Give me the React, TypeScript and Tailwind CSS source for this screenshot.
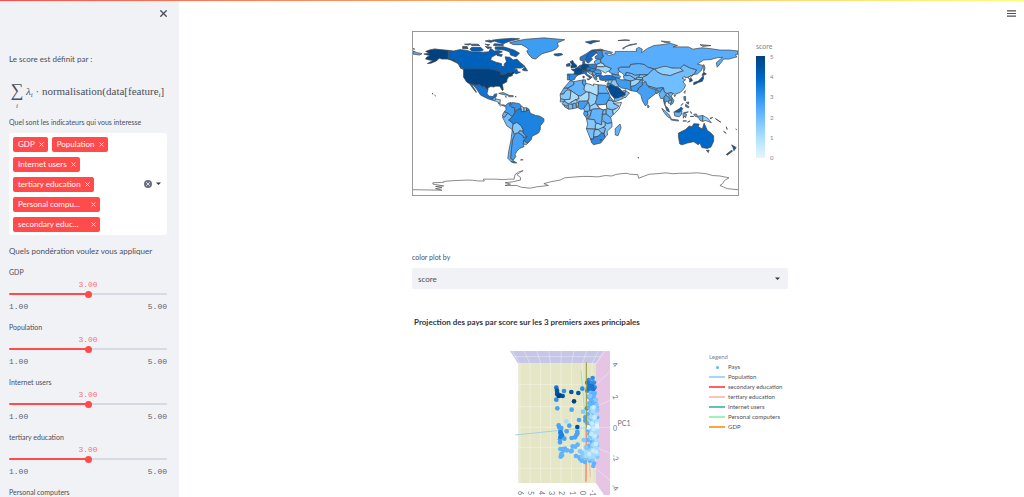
import { useState } from 'react';
import clsx from 'clsx';
import { X } from 'lucide-react';

interface Region {
  fill: string;
  // one entry per polygon, "lon,lat" pairs
  shapes: string[];
}

const REGIONS: Region[] = [
  { fill: '#004280', shapes: [
    '-124,48.5 -123,49 -95,49 -89,48 -83,46 -82.5,42.5 -79,43 -75,45 -71,45 -69,47 -67,45 -70,43 -70,41.5 -74,40.5 -76,37 -76,35 -81,32 -80,26 -81,25 -82.7,28 -84,30 -89,30 -90,29 -94,29.5 -97,28 -97,26 -99,27 -101,30 -103,29 -106,31.5 -111,31.3 -114.7,32.5 -117,32.5 -120.5,34.5 -124,40',
    '-141,60 -141,69.7 -150,70.5 -156,71.3 -162,70 -166,68.5 -162,66.5 -168,65.6 -164,64.5 -161,64 -165,62 -166,60 -162,59 -158,58.5 -164,55 -160,55.5 -154,58 -151,61 -148,60 -141,60 -137,58.5 -130,55 -132,57 -135,59.5',
    '-156,20 -155,19.2',
    '-159,22 -157.7,21.3',
  ] },
  { fill: '#0061bd', shapes: [
    '-141,60 -141,69.7 -135,69 -128,70.5 -120,69.5 -115,68 -108,68 -102,67.7 -96,68 -94,72 -90,69 -85,69.5 -81,68 -86,66 -93,62 -94,59 -88,56.5 -82,55 -82,52.5 -79,51.5 -79,54.5 -76.5,57 -78,62.5 -73,62 -69,59 -65,60 -61,56 -56,52 -60,50 -66,50 -69,48 -65,49 -64,46 -61,45.5 -66,43.5 -67,45 -69,47 -71,45 -75,45 -79,43 -82.5,42.5 -83,46 -89,48 -95,49 -123,49 -128,51 -130,55 -132,57 -135,59.5',
    '-80,73.7 -76,72.5 -68,70 -62,66.5 -66,62.5 -72,64.5 -73,68 -79,70 -89,71 -89,73.5',
    '-115,73 -105,73 -102,70 -105,69 -115,69 -117,71',
    '-125,74 -120,74 -119,71.5 -125,71.5',
    '-90,77 -80,76.5 -80,75 -91,75',
    '-92,81 -85,82 -70,83 -62,82.5 -75,79 -80,77 -87,79',
    '-116,76.5 -108,76.5 -106,75 -115,75',
    '-123,76.5 -116,77 -118,75.5',
    '-100,76.5 -95,76 -97,75',
    '-96,81 -90,80 -94,78.5 -100,80',
    '-87,66 -81,65 -82,63 -87,64',
    '-59,48 -56,51.5 -53,47 -56,47',
    '-128,50.5 -123.5,48.5 -125,49',
    '-100,74 -93,73 -97,71.5',
  ] },
  { fill: '#3d9df3', shapes: [
    '-73,78 -66,80 -55,82 -35,83.5 -12,81.5 -20,78 -19,74 -22,71 -26,69 -37,66 -42,62 -44,60 -48,61 -52,65 -54,69 -52,71 -56,74 -60,76 -69,76',
  ] },
  { fill: '#1272d3', shapes: [
    '-117,32.5 -114.7,32.5 -111,31.3 -106,31.5 -103,29 -101,30 -99,27 -97,26 -98,22 -96,19 -91,18.5 -90,21 -87,21.5 -88,18 -91,17 -92,14.5 -97,16 -105,20 -109,26 -113,31 -114.5,31 -110,24 -110,23 -114,28',
  ] },
  { fill: '#6ab9ff', shapes: ['-92,14.5 -91,17 -89,17.5 -88,15.7 -90,13.8', '-78,7.5 -82,9 -80,9.5 -77.4,8.5'] },
  { fill: '#97d3ff', shapes: ['-88,15.7 -83.2,15 -83.7,11 -87.5,13 -90,13.8', '-85.5,11 -83.7,11 -82,9 -83,8 -85,10'] },
  { fill: '#60b4ff', shapes: ['-85,22 -80,23 -74,20 -77,20', '-74,19.8 -69,19.5 -69,18.3 -74,18.3', '-78,18.4 -76.3,18', '-67,18.4 -65.6,18.2'] },
  { fill: '#3d9df3', shapes: ['-77.4,8.5 -75,11 -71.5,12 -73,9 -71,7 -67.5,6 -67,1 -70,-4 -75,0 -79,1.5 -77,4'] },
  { fill: '#3492eb', shapes: ['-71.5,12 -71,9.5 -70,12 -62,10.5 -60,8 -61,5 -64,4 -67,1 -67.5,6 -71,7 -73,9'] },
  { fill: '#97d3ff', shapes: ['-60,8 -57,6 -57,2 -60,1.5 -61,5', '-57,6 -54,6 -54.5,2.3 -57,2'] },
  { fill: '#3d9df3', shapes: ['-54,6 -51.5,4.3 -54.5,2.3'] },
  { fill: '#60b4ff', shapes: ['-79,1.5 -75,0 -78.5,-4.5 -81,-3 -80,0'] },
  { fill: '#70bdff', shapes: ['-81,-4 -78.5,-4.5 -75,0 -70,-4 -74,-7.5 -70.5,-10 -69,-12 -70,-18 -76,-14 -79,-8'] },
  { fill: '#83c9ff', shapes: ['-69,-12 -65,-10 -60,-14 -58,-18 -58,-20 -62,-19.5 -63,-22 -68,-23 -70,-18'] },
  { fill: '#1c83e1', shapes: [
    '-70,-4 -67,1 -64,4 -60,5 -60,1.5 -57,2 -54.5,2.3 -51.5,4.3 -50,0 -44,-2.5 -40,-3 -35,-6 -35,-9 -39,-14 -39,-18 -41,-22 -48,-25.5 -49,-29 -53,-33.5 -57.5,-30 -54,-26 -58,-22 -58,-18 -60,-14 -65,-10 -69,-12 -70.5,-10 -74,-7.5',
  ] },
  { fill: '#60b4ff', shapes: ['-62,-19.5 -58,-20 -58,-22 -54,-26 -58,-27 -58,-25 -63,-22', '-57.5,-30 -53,-33.5 -55,-35 -58,-34'] },
  { fill: '#459ff5', shapes: ['-66,-22 -63,-22 -58,-25 -58,-27 -54,-26 -57.5,-30 -58,-34 -57,-37 -62,-39 -65,-42 -67,-46 -66,-48 -69,-52 -72,-50 -71,-40 -70,-30 -68,-25', '-68.5,-53 -65,-55 -68.5,-55'] },
  { fill: '#60b4ff', shapes: ['-70,-18 -68,-23 -68,-25 -70,-30 -71,-40 -72,-50 -69,-52 -71,-54 -75,-50 -74,-42 -71.5,-30', '-71,-54 -68.5,-53 -68.5,-55'] },
  { fill: '#83c9ff', shapes: ['-61,-51.7 -58,-51.5'] },
  { fill: '#0e5fb5', shapes: ['-24,65.5 -16,66.3 -14,65 -19,63.4 -23,64'] },
  { fill: '#004c92', shapes: ['-5,50 1,51 1.5,53 -2,56 -3,58.5 -6,57 -4,54 -5,52'] },
  { fill: '#0e5fb5', shapes: ['-10,52 -6,52.3 -6,55 -8,55 -10,54'] },
  { fill: '#004c92', shapes: ['-4.5,48.5 -1,49 2.5,51 6,49.5 8,48.7 7,46 7.5,43.8 3,42.5 -1.7,43.4 -1,46', '6,49.5 6,51 7,53.5 9,55 14,54 15,51 12,50 13,48 8,47.7 8,48.7'] },
  { fill: '#1468c0', shapes: ['2.5,51 4.5,53 7,53.5 6,51 6,49.5', '8,55 8,57 10.5,57.5 10,55', '7,46 8,47.7 13,47.7 16.5,48.7 16,46.7 12,46.8 10,46.5'] },
  { fill: '#2b8ce8', shapes: ['-9,43.5 -1.7,43.4 3,42.5 0,40 -1,37.5 -5,36 -7,37 -7,42 -9,42'] },
  { fill: '#4aa4f6', shapes: ['-9,42 -7,42 -7,37 -9,37'] },
  { fill: '#1a70c9', shapes: ['7,46 10,46.5 12,46.8 13.5,46 12,44.5 14,42.5 18.5,40 16,38 15,40 12,42 10,44 7.5,43.8', '12.5,38 15.5,38 15,36.8', '8,41 9.7,41 9.5,39 8.5,39'] },
  { fill: '#2278d3', shapes: ['5,59 5,62 12,66 18,70 28,71 31,70 26,69.5 20,69 16,68 13,64.5 12,61 11,59 8,58'] },
  { fill: '#1469c6', shapes: ['11,59 12,61 13,64.5 16,68 20,69 24,67 22,65.5 17,61.5 19,60 16,57 14,55.5 12.5,56.5'] },
  { fill: '#2f88dd', shapes: ['20,69 26,69.5 29,69.5 30,66 31,62.5 28,60.5 22.5,60 21.5,62.5 25,65 24,67'] },
  { fill: '#1c83e1', shapes: ['14,54 19,54.5 23.5,54 23.5,51 22.5,49 18,49.5 15,51'] },
  { fill: '#2f8fe6', shapes: ['12,50 15,51 18,49.5 22.5,49 21,46 16,46.7 16.5,48.7 13,48.7'] },
  { fill: '#60b4ff', shapes: ['21,57.5 24,59.5 28,59.5 28,56 23.5,54 21,55.5', '13.5,46 16,46.7 19,46 19,42 15,44.5', '19,42 19,46 21,46 22.5,44 22,42', '19.5,40 19.5,42.5 21,41.5'] },
  { fill: '#4aa4f6', shapes: ['20.5,46 22.5,48 26.5,48 28.5,45.3 28.5,43.7 23,44', '22.5,44 28.5,43.7 28,42 23,41.5'] },
  { fill: '#2f8fe6', shapes: ['20,39.5 23,41.3 26,41.5 23,40 24,38 22.5,36.5 21,38', '23.5,35.5 26,35.2'] },
  { fill: '#b4e2ff', shapes: ['23.5,54 28,56 31,55 32,53 30.5,51.5 23.5,51.5'] },
  { fill: '#9bd6ff', shapes: ['22.5,49 23.5,51.5 30.5,51.5 34,52 40,49.5 38,47 35,46 33,44.5 30,46.3 26.5,48'] },
  { fill: '#1c75d2', shapes: ['26,41.5 28,41.8 31,41.2 35,42 41,41.5 44.5,39.5 44.5,37 36,36.5 30,36.3 27,37'] },
  { fill: '#0e5fb5', shapes: ['11,79 20,80.5 27,80 20,78.5 17,76.7'] },
  { fill: '#58aefc', shapes: [
    '28,60 31,62.5 30,66 29,69.5 33,69.5 41,67.5 40,66.3 33,66.6 37,64 44,66 44,68.5 54,68.5 60,68.5 68,68.5 67,71 70,73 74,71 73,67 80,72 87,75 100,76.5 105,77.5 113,75 108,73.5 125,73.5 130,71 140,72.5 150,71.5 160,70 170,70 180,69 180,65.5 177,64.5 179,62.5 170,60 164,60 162,57 157,51 156,56 163,62 157,61.5 150,59.5 142,59 135,54.5 141,53 140,48 135,43.5 131,43 134,48 127,50 120,53.5 117,49.5 107,50 98,50.5 88,49 80,51 76,54 70,55 61,54 60,51 50,51 47,49.5 49,46 47,45 48,42 42,43.5 38,45 37,47 40,49.5 34,52 32,53 31,55 28,56',
    '-180,69 -175,67 -170,66 -173,64.5 -180,65.5',
    '53,71 56,74 68,77 60,76 52,72',
    '142,54 143.5,50 142,46',
    '138,76 150,75 141,74',
    '95,80 105,79 100,78',
    '-180,71.5 -178,71',
    '47,80.5 60,80.8 55,81.5',
  ] },
  { fill: '#60b4ff', shapes: ['47,49.5 50,51 60,51 61,54 70,55 76,54 80,51 87,49 83,46 80,42.5 71,42.5 66,42 62,44 56,45 55,41.5 51,45 49,46'] },
  { fill: '#70bdff', shapes: ['56,45 62,44 66,42 71,42.5 71,40.5 67.5,39.5 67,37.5 60,42 56,41.5', '53,41.5 60,42 67,37.5 62,35.5 54,37.3'] },
  { fill: '#83c9ff', shapes: ['71,42.5 80,42.5 74,39.5 70,39.7', '67.5,39.5 74,39.5 74.5,37.5 68,37'] },
  { fill: '#4aa4f6', shapes: ['41,41.5 40,43.5 48,42 50,40.5 48.5,38.5 44.5,39.5'] },
  { fill: '#8fd0ff', shapes: ['88,49 98,52 102,51.5 107,50 116,50 119.5,47 112,44.5 105,41.7 96,43 91,45.5'] },
  { fill: '#70bdff', shapes: [
    '74,39.5 80,42.5 83,46 87,49 91,45.5 96,43 105,41.7 112,44.5 119.5,47 116,50 120,53.5 127,50 134,48 131,43 125,40 121.5,39 121,41 118,39 122,37 119,35 122,31 120,27 116,23 110,21 106,22.8 102,21.5 98,24 97.5,28 92,27.5 88,28 81,30 78,33 74.5,37.5',
    '109,20 111,20 110,18.3',
  ] },
  { fill: '#ffffff', shapes: ['125,40 131,43 127.5,39.5 126.5,38 125,38.5', '120,23.5 121.8,25 121,22'] },
  { fill: '#0054a3', shapes: ['126.5,38 128.5,38.5 129.5,36 126.5,34.5'] },
  { fill: '#0054a3', shapes: ['131,34 136,35.7 140,39.5 141.5,41.5 142,39 140.5,35.5 136,34 131,31.5', '140,42 142,45.5 145,43.5 142,42'] },
  { fill: '#459ff5', shapes: ['68,24 70,28 74,31 74,34 78,35 79,31 81,30 88,26.5 92,28 97,28.5 94,24 91.5,23 89,22 86.5,20 80,15 80,11 77.5,8 74,14 72.5,20'] },
  { fill: '#3d9df3', shapes: ['61.5,25 61,29.5 66,31 70,34 72,37 74.5,37 74,34 74,31 70,28 68,24', '80,9.5 81.7,7 80,6'] },
  { fill: '#9bd6ff', shapes: ['61,29.5 61,35.5 67,37.5 72,37 70,34 66,31', '81,30 88,28 88,26.5 81,28.8'] },
  { fill: '#58aefc', shapes: ['89,26 91.5,25 91.5,22.5 89,22'] },
  { fill: '#60b4ff', shapes: ['92.5,21 94,24 97.5,28 98,24 101,21.5 98,18 99,14 98.5,10.5 97,16.5 94.5,16'] },
  { fill: '#4aa4f6', shapes: ['98,18 100,20 104,17.5 105,14.5 102.5,12.5 100,13.5 99,9 102,6 100,6.5 98.5,10.5'] },
  { fill: '#83c9ff', shapes: ['101,21.5 102,22 107,16 106,14.5 104,17.5 100,20', '103,14 107,14 106,11 103,11'] },
  { fill: '#60b4ff', shapes: ['102,22 106,22.8 108,21.5 106,19 109,14 108,11 105,9 107,14 107,16'] },
  { fill: '#0e5fb5', shapes: ['100,6.5 103,5 104,1.5 101,3', '110,2 115,5 117,7 119,5 115,1 111,1'] },
  { fill: '#60b4ff', shapes: [
    '95.5,5.5 100,2 104,-2 106,-6 102,-4 98,1',
    '105.5,-6.5 114,-7.5 114,-8.7 106,-7.5',
    '109,1.5 115,1 118,3 117.5,-1 115,-4 110,-3',
    '119,0 121,1 125,1.5 120.5,0 123,-1 122,-5 120.5,-3 119.5,-5.5',
    '131,-1 134,-0.8 135,-3.3 141,-2.5 141,-9 138,-8 136,-4.5 132,-3',
    '119,-8.5 123,-8.5', '124,-10 127,-8.5', '127.5,2 128.5,-0.5', '127,-3.5 131,-3.5',
  ] },
  { fill: '#97d3ff', shapes: ['141,-2.5 147,-6 150.5,-10.5 144,-8 141,-9', '149,-5.5 152,-4.5 150,-6.2'] },
  { fill: '#3d8fe0', shapes: ['120,18.5 122,18.5 122,14 120.3,14.5', '122,10 126,7 125,6 122,7.5', '122.5,12 125.5,12.5 125,10', '117,8.5 119,11'] },
  { fill: '#0068c9', shapes: [
    '114,-22 114,-26 115.5,-34 118,-35 124,-33 131,-31.5 136,-35 138,-33 140,-38 146,-39 150,-37.5 153,-31 153,-25 149,-21 146,-19 142.5,-11 140.5,-17.5 136,-15 137,-12 131,-11.5 129,-15 126,-14 122,-18',
    '145,-41 148,-41 147,-43.5',
  ] },
  { fill: '#0e5fb5', shapes: ['173,-35 178,-38 175.5,-41.5 174.5,-38', '173,-41 174,-42 168,-46.5 167,-45.5'] },
  { fill: '#83c9ff', shapes: ['155,-6 161,-10', '164,-20 167,-22.3', '167,-15 168,-18', '177.5,-17.5 178.5,-18.2', '69,-49 70.3,-49.5'] },
  { fill: '#3d9df3', shapes: ['44.5,39.5 48.5,38.5 50,37 54,37 61,36 61,29.5 61.5,25 57,27 51,28 48,30 45.5,34 44.5,37'] },
  { fill: '#83c9ff', shapes: ['39,33 41,37 44.5,37 45.5,34 48,30 44.5,29.3', '36,36.5 41,37 39,33 36,33'] },
  { fill: '#2f8fe6', shapes: ['35,33 36,33 39,32 37,29.5 35,29.5', '32.5,35 34.5,35.5'] },
  { fill: '#004c92', shapes: ['35,29.5 37,29.5 39,32 44.5,29.3 48,28.5 50,26.5 51.5,24.3 55,22.5 55,20 52,19 47,17 43,16.5 39,21'] },
  { fill: '#60b4ff', shapes: ['51.5,24.3 56,26 55,22.5', '43,16.5 47,17 52,19 53,16.5 45,13 43,13'] },
  { fill: '#83c9ff', shapes: ['56,24.5 59.8,22.5 55,17 52,19 55,20 55,22.5'] },
  { fill: '#60b4ff', shapes: ['-6,36 -2,35 -1.5,32 -8.5,28 -13,27.7 -9.8,31.5', '25,31.5 32,31 34.5,30 34,27.5 37,22 25,22'] },
  { fill: '#60b4ff', shapes: ['-17,21 -13,27.7 -8.7,27.7 -8.7,26 -12,23.5 -13,21.3'] },
  { fill: '#60b4ff', shapes: ['-2,35 8.5,37 7.5,33.5 10,30 9.5,26.5 12,23.5 5.5,19 3,19.5 -5,25 -8.7,27.5 -1.5,32'] },
  { fill: '#4aa4f6', shapes: ['8.5,37 11,37 11.5,33 10,30 7.5,33.5'] },
  { fill: '#b0e0ff', shapes: ['11.5,33 15.5,32.3 20,30.5 20,32.5 25,31.5 25,20 24,19.5 15,23.5 12,23.5 9.5,26.5 10,30'] },
  { fill: '#83c9ff', shapes: ['-17,21 -13,21.3 -12,23.5 -8.7,26 -5,25 -6,15.5 -12,15 -16.5,16'] },
  { fill: '#a6dcff', shapes: ['-5,25 3,19.5 4,16 0,15 -5,12 -8,10.5 -12,13 -12,15 -6,15.5'] },
  { fill: '#a6dcff', shapes: ['3,19.5 5.5,19 12,23.5 15,23 15,17 13,13.5 4,13 0,15 4,16'] },
  { fill: '#8fd0ff', shapes: ['15,23.5 24,19.5 23.5,15.5 22,11 16,7.5 14,13 15,17'] },
  { fill: '#4aa4f6', shapes: ['25,22 37,22 38.5,18 36,14 34,10 24,9 22,12.5 23.5,15.5 24,20 25,20'] },
  { fill: '#ffffff', shapes: ['24,9 34,10 35,5 31,3.7 27,5'] },
  { fill: '#70bdff', shapes: ['36,14 38.5,18 43,12.5 39.5,14.5', '-16.5,16 -12,15 -12,13 -17,12.5'] },
  { fill: '#83c9ff', shapes: ['34,10 36,14 39.5,14.5 42,12 42,11 48,8 45,5 40,4 35,5'] },
  { fill: '#b0e0ff', shapes: ['42,11 51,12 48,4.5 42,-1.7 41,3.5 45,5 48,8'] },
  { fill: '#70bdff', shapes: ['-15,11 -12,13 -8,10.5 -8,7.7 -11,8.5 -13.5,9', '-13,9.5 -11,8.5 -7.5,4.5 -12,7', '-8,10.5 -5,10 -3,9.5 -3,5 -7.5,4.5 -8,8'] },
  { fill: '#97d3ff', shapes: ['-5,12 0,15 2.5,12 0,11 -3,9.5 -5,10', '1,11 3.5,12 2.7,6.3 1.2,6'] },
  { fill: '#60b4ff', shapes: ['-3,11 0,11 1.2,6 -3,5'] },
  { fill: '#3d9df3', shapes: ['2.7,6.3 3.5,12 4,13.5 13,13.5 14,12 9,5 6,4.3'] },
  { fill: '#70bdff', shapes: ['9,5 14,12 15,10 16,2 10,2.2'] },
  { fill: '#97d3ff', shapes: ['16,7.5 22,11 27,5 19,4.5 16,3'] },
  { fill: '#4aa4f6', shapes: ['9.5,2 13,2 14,-2 11,-4 9,-1'] },
  { fill: '#70bdff', shapes: ['13,2 18,3.5 16,-3 12,-5 11,-4 14,-2'] },
  { fill: '#60b4ff', shapes: ['12,-6 16,-4 18,3.5 19,4.5 27,5 31,3.7 29.5,-1 29.5,-6 28.5,-9 29,-13 25,-11.5 22,-11 21,-7'] },
  { fill: '#70bdff', shapes: ['31,3.7 34,4 34,-1 29.7,-1.3', '34,4 35,5 40,4 41,3.5 41.5,-1.7 39,-4.7 34,-1'] },
  { fill: '#60b4ff', shapes: ['30.5,-1 34,-1 39,-4.7 40.3,-10.5 35,-11.5 30,-8 29.5,-5'] },
  { fill: '#83c9ff', shapes: ['12,-6 17,-7 21,-7 22,-11 24,-11 22,-13 22,-17.5 12,-17 13.5,-12'] },
  { fill: '#97d3ff', shapes: ['22,-13 24,-11 29,-13 29,-9 33,-10 33,-14 27,-18 22,-17.5'] },
  { fill: '#83c9ff', shapes: ['33,-10 35,-11.5 40.3,-10.5 40.5,-15 35,-20 35.5,-24 32.7,-26.5 31.5,-23 33,-17 30.5,-15.5 33,-14'] },
  { fill: '#70bdff', shapes: ['25,-18 30.5,-15.5 33,-17 31.5,-22.3 28,-21.5'] },
  { fill: '#70bdff', shapes: ['12,-17 25,-18 21,-18.5 20,-28.5 16.5,-28.5 14,-22'] },
  { fill: '#83c9ff', shapes: ['21,-18.5 25,-18 29,-22 25,-25.5 20,-26.5'] },
  { fill: '#2f88e2', shapes: ['16.5,-28.5 20,-28.5 20,-26.5 25,-25.5 29,-22 31.5,-22.5 32.7,-27 28,-33 20,-34.8 18,-33'] },
  { fill: '#60b4ff', shapes: ['27,-29.5 29,-29 28.5,-30.5', '49.3,-12 50.5,-16 47,-25 44,-24 44,-17'] },
];

const ANTARCTICA =
  '-180,-84.7 -160,-85 -148,-85.3 -155,-83.5 -148,-82.5 -155,-81 -146,-80.5 -158,-78.5 -158,-77 -146,-76.5 -146,-75.5 -136,-74.7 -120,-74 -114,-74.2 -108,-75 -101,-75 -102,-73 -89,-73 -80,-73.5 -74,-73 -68,-73 -67,-68 -63,-65 -58,-63.5 -62,-66 -65,-68 -61,-71 -61,-74 -70,-76 -78,-77 -72,-78.5 -78,-80 -65,-80 -60,-82 -50,-83 -43,-81.5 -30,-80 -35,-78 -28,-76 -17,-74 -12,-71.5 0,-70.5 8,-70 15,-70 25,-70.5 33,-69 40,-69.5 45,-67.8 50,-67 57,-66.5 60,-67.5 69,-68 70,-72 75,-70 82,-67.5 90,-67 100,-66 108,-67 115,-66.5 125,-66.5 135,-66 145,-67 152,-69 160,-69.5 170,-71.5 165,-74.5 163,-78 160,-80 168,-83.5 180,-84.7';

const INDICATORS = [
  { name: 'GDP', short: 'GDP' },
  { name: 'Population', short: 'Population' },
  { name: 'Internet users', short: 'Internet users' },
  { name: 'tertiary education', short: 'tertiary education' },
  { name: 'Personal computers', short: 'Personal compu…' },
  { name: 'secondary education', short: 'secondary educ…' },
];

const LEGEND = [
  { label: 'Population', line: 'bg-[#83c9ff]' },
  { label: 'secondary education', line: 'bg-[#ff2b2b]' },
  { label: 'tertiary education', line: 'bg-[#ffabab]' },
  { label: 'Internet users', line: 'bg-[#29b09d]' },
  { label: 'Personal computers', line: 'bg-[#7defa1]' },
  { label: 'GDP', line: 'bg-[#ff8700]' },
];

// [colour, "x,y x,y ..."], drawn in order
const POINTS: [string, string][] = [
  ['#2f8fe6', '266,120 278,114 284,142 270,132 262,152 276,128 272,146 282,128 247,146 192,153 169,179 261,205 274,190'],
  ['#1c75d2', '268,138 276,138 265,146 280,148 169,143 262,128'],
  ['#0054a3', '171,152 172,160 176,167 180,166 188,168 214,156 235,159 172,163 232,261'],
  ['#004280', '222,184 177,168'],
  ['#4aa4f6', '172,205 215,209 237,240 256,232 256,242 208,257 181,272 232,275 176,256 184,264 181,280 178,262 183,288 193,296 180,298 180,307 200,274 229,285 225,292 215,294 232,281'],
  ['#1c83e1', '182,277 186,286 181,291 184,282'],
  ['#60b4ff', '181,327 184,342 182,350 186,346 190,332 195,326 201,331 213,334 218,319 226,320 233,314 228,348 238,352 245,362 240,356 215,332 188,327'],
  ['#60b4ff', '265,170 273,178 281,186 268,190 278,196 287,192 266,202 290,204 264,222 278,226 291,232 262,250 270,258 282,246 264,270 268,282 276,292 263,300 275,306 267,318 288,212 281,170 284,160 274,160 262,330 280,378 282,370 270,362 255,366 250,352'],
  ['#83c9ff', '249,215 270,168 272,212 283,206 285,220 268,235 276,242 288,246 273,268 285,264 292,256 280,280 290,290 270,290 284,304 291,316 276,318 283,328 268,330 291,334 258,322 246,338 254,344 240,334 262,346 274,344 286,346 292,350 266,356 278,358 247,350 251,300 290,196 292,210 288,180'],
  ['#a6dcff', '199,244 276,204 280,214 288,224 274,230 283,238 291,244 281,256 275,262 292,272 286,276 278,272 287,284 282,292 290,302 280,314 287,322 275,332 290,328 284,340 292,342 264,338 258,336 270,350 280,350 257,348'],
  ['#c7ebff', '281,202 284,232 291,252 276,250 281,266 292,262 274,282 284,288 288,312 280,332 289,336 268,342'],
  ['#e4f5ff', '291,258 265,262'],
];

const GRID_X = [60, 90, 122, 152, 183, 215, 247, 276];
const GRID_Y = [71, 133, 200, 262, 322, 385];

function WorldMap() {
  return (
    <svg viewBox="-180 -90 360 180" className="block w-full border border-[#999]" role="img" aria-label="score">
      <g transform="scale(1,-1)" stroke="#444" strokeWidth="0.8" strokeLinejoin="round">
        {REGIONS.map((region) =>
          region.shapes.map((points) => <polygon key={points} points={points} fill={region.fill} />),
        )}
        <polyline points={ANTARCTICA} fill="none" strokeWidth="0.7" />
      </g>
    </svg>
  );
}

function ColorBar() {
  return (
    <div className="text-[7px] leading-[9px] text-[#808495]">
      <div>score</div>
      <div className="mt-[5px] flex gap-[5px]">
        <div className="h-[102px] w-[9px] bg-[linear-gradient(to_top,#e4f5ff,#c7ebff,#a6dcff,#83c9ff,#60b4ff,#3d9df3,#1c83e1,#0068c9,#0054a3,#004280)]" />
        <div className="-my-1 flex flex-col justify-between text-[6px]">
          {[5, 4, 3, 2, 1, 0].map((n) => (
            <span key={n}>{n}</span>
          ))}
        </div>
      </div>
    </div>
  );
}

function Projection() {
  return (
    <svg viewBox="0 0 140 160" className="block h-[160px] w-[140px] shrink-0">
      <g transform="scale(0.3333)">
        <path d="M30 33H310L288 71H55Z" fill="#c6c7e6" />
        <path d="M55 71H288V429H55Z" fill="#e5e6c6" />
        <path d="M310 33H330V465H312L288 429V71Z" fill="#e5c5e3" />
        <g stroke="#fff" strokeOpacity="0.5" strokeWidth="2" fill="none">
          {GRID_X.map((x) => (
            <path key={x} d={`M${30 + (x - 55) * 1.2} 33L${x} 71V429`} />
          ))}
          {GRID_Y.map((y) => (
            <path key={y} d={`M55 ${y}H288L330 ${262 + (y - 262) * 1.3}`} />
          ))}
          <path d="M40 50H300" />
        </g>
        <path d="M243 92L256 240" stroke="#a9e3a6" strokeWidth="3" />
        <path d="M46 285L258 263" stroke="#a0d2e6" strokeWidth="3" />
        <path d="M259 265L258 425" stroke="#f59378" strokeWidth="5" />
        <path d="M266 300L271 412" stroke="#f3b7a4" strokeWidth="3" />
        {POINTS.map(([color, list], group) => (
          <g key={group} fill={color}>
            {list.split(' ').map((p) => {
              const [x, y] = p.split(',');
              return <circle key={p} cx={x} cy={y} r="7" />;
            })}
          </g>
        ))}
        <path d="M259 67V265" stroke="#95953c" strokeWidth="3" />
      </g>
      <g fontSize="7" fill="#6b6f80" textAnchor="middle">
        {[6, 5, 4, 3, 2, 1, 0, -1].map((n, i) => (
          <text key={n} transform={`translate(${GRID_X[i] / 3 - 2} 153) rotate(90)`}>{n}</text>
        ))}
        <text transform="translate(113 26) rotate(50)">4</text>
        <text transform="translate(113 58) rotate(65)">2</text>
        <text transform="translate(115 91)">0</text>
        <text transform="translate(113 119) rotate(60)">-2</text>
        <text transform="translate(113 149) rotate(50)">-4</text>
        <text x="124" y="86">PC1</text>
      </g>
    </svg>
  );
}

function WeightSlider({ label }: { label: string }) {
  const [value, setValue] = useState(3);
  const filled = ((value - 1) / 4) * 100;

  return (
    <label className="block h-[55px] shrink-0">
      <span className="block text-[7px] leading-[10px]">{label}</span>
      <span className="mt-1 block text-center font-['Liberation_Mono',monospace] text-[8px] leading-[8px] text-[#ff4b4b]/80">
        {value.toFixed(2)}
      </span>
      <input
        type="range"
        min={1}
        max={5}
        step={0.01}
        value={value}
        onChange={(e) => setValue(Number(e.target.value))}
        style={{ backgroundImage: `linear-gradient(to right, #ff4b4b ${filled}%, #d5dae5 ${filled}%)` }}
        className="mt-1 block h-[2px] w-full appearance-none rounded-full [&::-webkit-slider-thumb]:size-[7px] [&::-webkit-slider-thumb]:appearance-none [&::-webkit-slider-thumb]:rounded-full [&::-webkit-slider-thumb]:bg-[#ff4b4b]"
      />
      <span className="mt-2 flex justify-between font-['Liberation_Mono',monospace] text-[8px] leading-[8px] text-[#5f6270]">
        <span>1.00</span>
        <span>5.00</span>
      </span>
    </label>
  );
}

interface TagProps {
  label: string;
  onRemove: () => void;
}

function Tag({ label, onRemove }: TagProps) {
  return (
    <span
      className={clsx(
        'flex h-[15px] items-center justify-between gap-[3px] rounded-[2px] bg-[#ff4b4b] pr-[3px] pl-[5px] text-[8px] text-white',
        label.endsWith('…') && 'min-w-[87px]',
      )}
    >
      {label}
      <button type="button" onClick={onRemove} aria-label={`Remove ${label}`}>
        <X className="size-[7px]" strokeWidth={3} />
      </button>
    </span>
  );
}

function Caret() {
  return (
    <svg viewBox="0 0 6 4" className="w-[5px]" fill="#31333f">
      <path d="M0 0.5H6L3 3.5Z" />
    </svg>
  );
}

function Sidebar() {
  const [selected, setSelected] = useState(INDICATORS);

  return (
    <aside className="flex w-[179px] shrink-0 flex-col overflow-hidden bg-[#f0f2f6] pr-3 pl-[9px]">
      <button type="button" aria-label="Close" className="mt-2 -mr-[2px] self-end">
        <X className="size-[11px]" strokeWidth={3} />
      </button>
      <p className="mt-[33px] text-[8px] leading-[14px]">Le score est définit par :</p>
      <div className="mt-[12px] flex h-[35px] shrink-0 font-['Liberation_Serif',serif] text-[11px] whitespace-nowrap">
        <span className="flex w-4 shrink-0 flex-col items-center">
          <span className="text-[18px] leading-[24px]">∑</span>
          <i className="text-[7px] leading-[9px]">i</i>
        </span>
        <span className="ml-px leading-[26px]">
          <i>λ</i>
          <sub className="text-[7px] italic">i</sub> · normalisation(data[feature
          <sub className="text-[7px] italic">i</sub>]
        </span>
      </div>
      <p className="mt-1 text-[7px] leading-[10px]">Quel sont les indicateurs qui vous interesse</p>
      <div className="mt-[6px] flex min-h-[102px] shrink-0 items-center rounded-[3px] bg-white py-[3px] pr-[6px] pl-1">
        <div className="flex flex-1 flex-wrap gap-x-1 gap-y-[5px]">
          {selected.map((item) => (
            <Tag
              key={item.name}
              label={item.short}
              onRemove={() => setSelected((prev) => prev.filter((other) => other !== item))}
            />
          ))}
        </div>
        <button
          type="button"
          aria-label="Clear all"
          onClick={() => setSelected([])}
          className="mr-1 flex size-2 items-center justify-center rounded-full bg-[#6b6f80] text-white"
        >
          <X className="size-[6px]" strokeWidth={3} />
        </button>
        <Caret />
      </div>
      <p className="mt-[9px] text-[8px] leading-[14px]">Quels pondération voulez vous appliquer</p>
      <div className="mt-[9px] flex flex-col">
        {INDICATORS.map((item) => (
          <WeightSlider key={item.name} label={item.name} />
        ))}
      </div>
    </aside>
  );
}

export default function App() {
  return (
    <div className="relative flex h-screen overflow-hidden bg-white font-[Lato,sans-serif] text-[#4c4e5a]">
      <div className="absolute inset-x-0 top-0 h-px bg-linear-to-r from-[#ff4b4b] to-[#fffd80]" />
      <Sidebar />
      <main className="relative flex-1 pr-[3px]">
        <button type="button" aria-label="Menu" className="absolute top-[10px] right-2">
          <svg viewBox="0 0 9 7" className="block w-[9px]" stroke="#4c4e5a" strokeWidth="1.2">
            <path d="M0 0.8H9M0 3.5H9M0 6.2H9" />
          </svg>
        </button>
        <div className="mx-auto w-full max-w-[376px] pt-[31px]">
          <section className="flex h-[164px] gap-[17px]">
            <div className="w-[327px]">
              <WorldMap />
            </div>
            <div className="mt-[11px]">
              <ColorBar />
            </div>
          </section>
          <label htmlFor="color-by" className="mt-[57px] block text-[7px] leading-[10px]">
            color plot by
          </label>
          <div className="relative mt-[6px]">
            <select
              id="color-by"
              className="block h-[21px] w-full appearance-none rounded-[2px] bg-[#f0f2f6] px-[6px] text-[8px]"
            >
              <option>score</option>
            </select>
            <span className="pointer-events-none absolute inset-y-0 right-[8px] flex items-center">
              <Caret />
            </span>
          </div>
          <h2 className="mt-[26px] ml-[2px] text-[8px] leading-[14px] font-bold text-[#31333f]">
            Projection des pays par score sur les 3 premiers axes principales
          </h2>
          <section className="mt-[11px] flex pl-[88px]">
            <Projection />
            <div className="mt-[12px] ml-[69px] text-[6px] leading-[10px] whitespace-nowrap">
              <div className="text-[#808495]">Legend</div>
              <ul>
                <li className="flex items-center gap-[3px]">
                  <span className="flex w-4 justify-center">
                    <span className="size-[3px] rounded-full bg-[#60b4ff]" />
                  </span>
                  Pays
                </li>
                {LEGEND.map((item) => (
                  <li key={item.label} className="flex items-center gap-[3px]">
                    <span className={clsx('h-[2px] w-4 opacity-75', item.line)} />
                    {item.label}
                  </li>
                ))}
              </ul>
            </div>
          </section>
        </div>
      </main>
    </div>
  );
}
